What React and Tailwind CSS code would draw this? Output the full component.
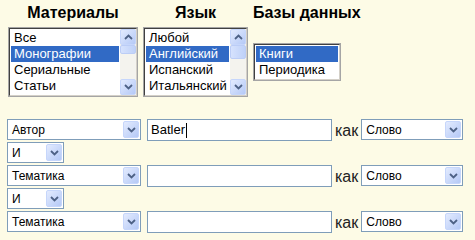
import React from 'react';

const font = "font-['Liberation_Sans',Arial,sans-serif]";

const Chevron = ({ up }) => (
  <svg width="9" height="6" viewBox="0 0 9 6">
    <path
      d={up ? 'M1 5L4.5 1.5L8 5' : 'M1 1L4.5 4.5L8 1'}
      stroke="#4d6185"
      strokeWidth="1.8"
      fill="none"
    />
  </svg>
);

const ArrowButton = ({ up, className }) => (
  <div
    className={`flex items-center justify-center rounded-[2px] border border-[#c6d6fb] bg-linear-to-br from-[#e3ebfe] to-[#b5c9f6] ${className}`}
  >
    <Chevron up={up} />
  </div>
);

const Scrollbar = ({ thumbClass }) => (
  <div className="flex w-[16px] flex-col bg-[#f4f3ee]">
    <ArrowButton up className="h-[16px] w-[16px]" />
    <div
      className={`rounded-[2px] border border-[#bccdf6] bg-linear-to-r from-[#d6e2fd] to-[#bfd1f8] ${thumbClass}`}
    />
    <div className="flex-1" />
    <ArrowButton className="h-[16px] w-[16px]" />
  </div>
);

const ListBox = ({ items, selected, className, scroll, thumbClass }) => (
  <div className={`border border-[#a5a5a5] ${className}`}>
    <div className="flex h-full border border-t-[#404040] border-l-[#404040] border-r-[#d4d0c8] border-b-[#d4d0c8] bg-white">
      <div className="flex-1 p-px">
        {items.map((item) => (
          <div
            key={item}
            className={`h-[16px] pl-[3px] text-[13px] leading-[16px] ${
              item === selected ? 'bg-[#316ac5] text-white' : 'text-black'
            }`}
          >
            {item}
          </div>
        ))}
      </div>
      {scroll && <Scrollbar thumbClass={thumbClass} />}
    </div>
  </div>
);

const Select = ({ value, className }) => (
  <div
    className={`flex h-[21px] items-center border border-[#7f9db9] bg-white pl-[4px] pr-px ${className}`}
  >
    <span className="flex-1 text-[12px] text-black">{value}</span>
    <ArrowButton className="h-[17px] w-[16px]" />
  </div>
);

const Input = ({ value, caret }) => (
  <div className="flex h-[22px] w-[185px] items-center border border-[#7f9db9] bg-white pl-[3px] text-[13px] text-black">
    {value}
    {caret && <span className="ml-px h-[15px] w-px bg-black" />}
  </div>
);

const SearchRow = ({ field, value, caret }) => (
  <div className="flex h-[22px] items-start">
    <Select value={field} className="w-[134px]" />
    <div className="ml-[6px]">
      <Input value={value} caret={caret} />
    </div>
    <span className="ml-[3px] mt-[2px] text-[16px] leading-[20px] text-[#222]">как</span>
    <Select value="Слово" className="ml-[3px] w-[102px]" />
  </div>
);

const Joiner = () => (
  <div className="flex h-[22px] items-start">
    <Select value="И" className="w-[57px]" />
  </div>
);

export default function App() {
  return (
    <div className={`h-[240px] w-[475px] overflow-hidden bg-[#fdfbe6] ${font}`}>
      <div className="ml-[8px] grid grid-cols-[130px_105px_auto] items-center gap-x-[5px] gap-y-[5px] pt-[4px]">
        <div className="text-center text-[16px] font-bold leading-[18px] text-black">Материалы</div>
        <div className="text-center text-[16px] font-bold leading-[18px] text-black">Язык</div>
        <div className="text-[16px] font-bold leading-[18px] text-black">Базы данных</div>

        <ListBox
          items={['Все', 'Монографии', 'Сериальные', 'Статьи']}
          selected="Монографии"
          className="h-[70px] w-[130px]"
          scroll
          thumbClass="h-[9px]"
        />
        <ListBox
          items={['Любой', 'Английский', 'Испанский', 'Итальянский']}
          selected="Английский"
          className="h-[70px] w-[105px]"
          scroll
          thumbClass="h-[14px]"
        />
        <ListBox
          items={['Книги', 'Периодика']}
          selected="Книги"
          className="h-[38px] w-[88px] justify-self-start"
        />
      </div>

      <div className="ml-[7px] mt-[22px] flex flex-col gap-px">
        <SearchRow field="Автор" value="Batler" caret />
        <Joiner />
        <SearchRow field="Тематика" value="" />
        <Joiner />
        <SearchRow field="Тематика" value="" />
      </div>
    </div>
  );
}
